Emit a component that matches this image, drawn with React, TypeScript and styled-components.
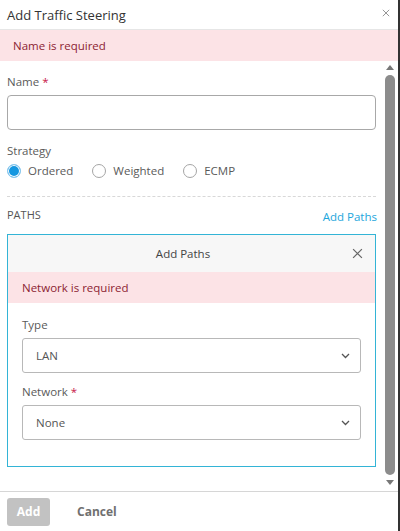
import React, { useState } from 'react';
import styled, { createGlobalStyle } from 'styled-components';

const GlobalStyle = createGlobalStyle`
  * { box-sizing: border-box; }
  html, body { margin: 0; padding: 0; background: #ffffff; }
  body { font-family: "Open Sans", "Noto Sans", sans-serif; color: #5a5a5a; }
`;

const CloseIcon = ({ size = 10, color = '#888' }: { size?: number; color?: string }) => (
  <svg width={size} height={size} viewBox="0 0 10 10">
    <path d="M1 1 L9 9 M9 1 L1 9" stroke={color} strokeWidth="1.1" fill="none" />
  </svg>
);

const Chevron = () => (
  <svg width="9" height="6" viewBox="0 0 9 6">
    <path d="M1 1 L4.5 4.5 L8 1" stroke="#555" strokeWidth="1.3" fill="none" />
  </svg>
);

const options = ['Ordered', 'Weighted', 'ECMP'];

const App = () => {
  const [strategy, setStrategy] = useState('Ordered');

  return (
    <>
      <GlobalStyle />
      <ModalDiv>
        <HeaderDiv>
          <h1>Add Traffic Steering</h1>
          <button className="closeBtn">
            <CloseIcon size={8} />
          </button>
        </HeaderDiv>
        <ErrorBanner $pad={13}>Name is required</ErrorBanner>
        <BodyRow>
          <ContentDiv>
            <Field>
              <Label>
                Name <span>*</span>
              </Label>
              <TextInput type="text" />
            </Field>
            <Field $gap={4}>
              <Label>Strategy</Label>
              <RadioRow>
                {options.map((opt) => (
                  <RadioLabel key={opt} onClick={() => setStrategy(opt)}>
                    <RadioDot $checked={strategy === opt} />
                    {opt}
                  </RadioLabel>
                ))}
              </RadioRow>
            </Field>
            <Divider />
            <PathsHead>
              <span className="title">PATHS</span>
              <a className="addLink">Add Paths</a>
            </PathsHead>
            <PathsBox>
              <BoxHeader>
                <span>Add Paths</span>
                <button>
                  <CloseIcon size={11} color="#666" />
                </button>
              </BoxHeader>
              <ErrorBanner $pad={14}>Network is required</ErrorBanner>
              <BoxBody>
                <Field $mb={11}>
                  <Label>Type</Label>
                  <SelectBox>
                    <span>LAN</span>
                    <Chevron />
                  </SelectBox>
                </Field>
                <Field $mb={0}>
                  <Label>
                    Network <span>*</span>
                  </Label>
                  <SelectBox>
                    <span>None</span>
                    <Chevron />
                  </SelectBox>
                </Field>
              </BoxBody>
            </PathsBox>
          </ContentDiv>
          <ScrollBar>
            <svg width="8" height="5" viewBox="0 0 8 5">
              <path d="M0 5 L4 0 L8 5 Z" fill="#777" />
            </svg>
            <div className="thumb" />
            <svg width="8" height="5" viewBox="0 0 8 5">
              <path d="M0 0 L4 5 L8 0 Z" fill="#777" />
            </svg>
          </ScrollBar>
        </BodyRow>
        <FooterDiv>
          <button className="addBtn">Add</button>
          <button className="cancelBtn">Cancel</button>
        </FooterDiv>
      </ModalDiv>
    </>
  );
};

export default App;

const ModalDiv = styled.div`
  width: 400px;
  height: 531px;
  display: flex;
  flex-direction: column;
  background: #fff;
  border-right: 2px solid #333;
  overflow: hidden;
`;

const HeaderDiv = styled.div`
  height: 30px;
  display: flex;
  align-items: center;
  justify-content: space-between;
  padding: 0 8px 0 7px;
  border-bottom: 1px solid #e6e6e6;
  h1 {
    margin: 0;
    font-size: 13px;
    font-weight: 400;
    color: #333;
  }
  .closeBtn {
    border: none;
    background: none;
    padding: 0;
    display: flex;
    margin-top: -3px;
  }
`;

const ErrorBanner = styled.div<{ $pad: number }>`
  height: 31px;
  flex-shrink: 0;
  display: flex;
  align-items: center;
  padding-left: ${(p) => p.$pad}px;
  background: #fce3e6;
  color: #8c2333;
  font-size: 11.5px;
`;

const BodyRow = styled.div`
  flex: 1;
  display: flex;
  min-height: 0;
`;

const ContentDiv = styled.div`
  flex: 1;
  padding: 13px 8px 0 7px;
  display: flex;
  flex-direction: column;
`;

const Field = styled.div<{ $gap?: number; $mb?: number }>`
  display: flex;
  flex-direction: column;
  gap: ${(p) => p.$gap ?? 5}px;
  margin-bottom: ${(p) => p.$mb ?? 13}px;
`;

const Label = styled.label`
  font-size: 11.5px;
  color: #5a5a5a;
  line-height: 16px;
  span {
    color: #c8174a;
  }
`;

const TextInput = styled.input`
  height: 35px;
  width: 100%;
  border: 1px solid #a8a8a8;
  border-radius: 4px;
  outline: none;
`;

const RadioRow = styled.div`
  display: flex;
  gap: 19px;
`;

const RadioLabel = styled.label`
  display: flex;
  align-items: center;
  gap: 7px;
  font-size: 11.5px;
  color: #5a5a5a;
  cursor: pointer;
`;

const RadioDot = styled.span<{ $checked: boolean }>`
  width: 14px;
  height: 14px;
  border-radius: 50%;
  border: 1px solid ${(p) => (p.$checked ? '#8cc9ee' : '#a5a5a5')};
  background: ${(p) => (p.$checked ? '#1597e0' : '#fff')};
  box-shadow: ${(p) => (p.$checked ? 'inset 0 0 0 1px #fff' : 'none')};
`;

const Divider = styled.div`
  border-top: 1px dashed #d8d8d8;
  margin: 5px 0 10px;
`;

const PathsHead = styled.div`
  display: flex;
  justify-content: space-between;
  align-items: flex-end;
  margin-bottom: 11px;
  .title {
    font-size: 11px;
    color: #555;
    line-height: 16px;
  }
  .addLink {
    font-size: 11.5px;
    color: #1da6dc;
    line-height: 16px;
    margin-bottom: -2px;
    margin-right: -1px;
    cursor: pointer;
  }
`;

const PathsBox = styled.div`
  border: 1px solid #33b4d6;
  display: flex;
  flex-direction: column;
`;

const BoxHeader = styled.div`
  height: 37px;
  display: flex;
  align-items: center;
  background: #f7f7f7;
  span {
    flex: 1;
    text-align: center;
    font-size: 11.5px;
    color: #444;
    padding-left: 16px;
  }
  button {
    width: 30px;
    margin-right: 3px;
    border: none;
    background: none;
    padding: 0;
    display: flex;
    justify-content: center;
  }
`;

const BoxBody = styled.div`
  padding: 14px 14px 26px;
  display: flex;
  flex-direction: column;
`;

const SelectBox = styled.div`
  height: 35px;
  border: 1px solid #b8b8b8;
  border-radius: 3px;
  display: flex;
  align-items: center;
  justify-content: space-between;
  padding: 0 10px 0 13px;
  font-size: 11.5px;
  color: #555;
`;

const ScrollBar = styled.div`
  width: 12px;
  margin-right: 2px;
  display: flex;
  flex-direction: column;
  align-items: center;
  padding: 4px 0 6px;
  gap: 5px;
  .thumb {
    flex: 1;
    width: 10px;
    background: #8c8c8c;
    border-radius: 5px;
  }
`;

const FooterDiv = styled.div`
  height: 40px;
  border-top: 1px solid #d6d6d6;
  display: flex;
  align-items: center;
  padding: 0 7px;
  gap: 27px;
  button {
    font-family: "Open Sans", sans-serif;
    font-size: 12px;
    font-weight: 700;
    border: none;
  }
  .addBtn {
    width: 43px;
    height: 28px;
    border-radius: 3px;
    background: #c2c2c2;
    color: #fff;
  }
  .cancelBtn {
    background: none;
    color: #707070;
    padding: 0;
  }
`;
